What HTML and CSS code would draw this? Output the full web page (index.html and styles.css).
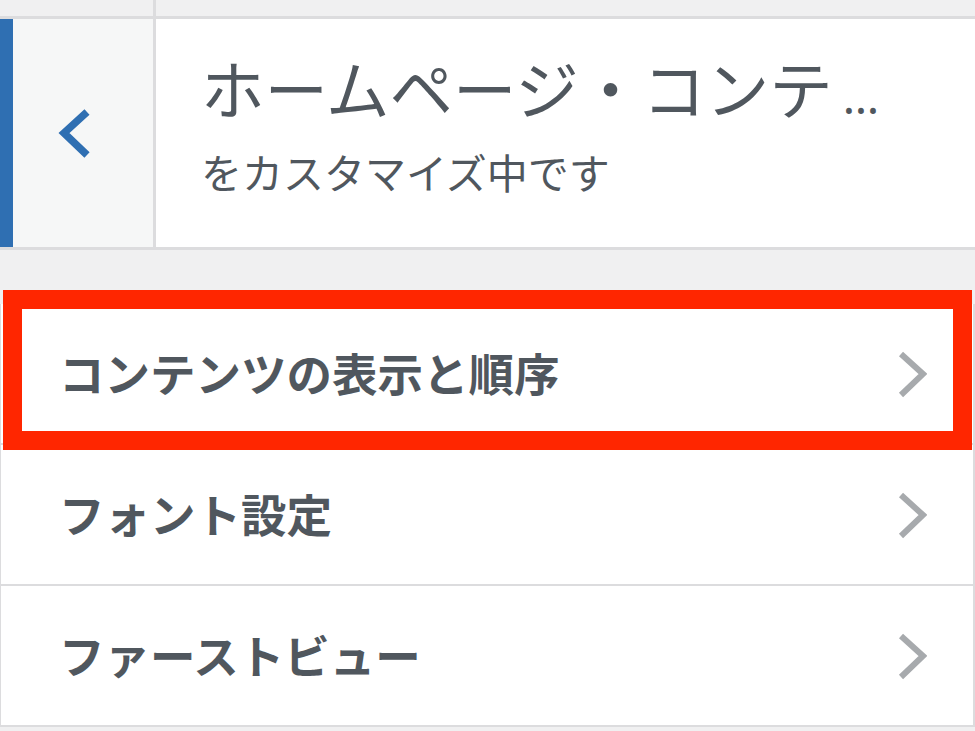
FILE: index.html
```html
<!DOCTYPE html>
<html lang="ja">
<head>
<meta charset="utf-8">
<title>Customizer</title>
<link rel="stylesheet" href="styles.css">
</head>
<body>
<div class="topbar"><div class="topbar-left"></div></div>
<div class="header">
  <div class="back">
    <svg class="back-icon" width="40" height="60" viewBox="0 0 40 60"><polyline points="37,9 14,30 37,52" fill="none" stroke="#2f6fb2" stroke-width="7.5"/></svg>
  </div>
  <div class="title-area">
    <div class="title">ホームページ・コンテ<span class="ellipsis">…</span></div>
    <div class="subtitle">をカスタマイズ中です</div>
  </div>
</div>
<div class="sections">
  <div class="row"><span class="row-label">コンテンツの表示と順序</span><svg class="chev" width="30" height="50" viewBox="0 0 30 50"><polyline points="4,5 26,25 4,46" fill="none" stroke="#a7aaad" stroke-width="6"/></svg></div>
  <div class="row"><span class="row-label">フォント設定</span><svg class="chev" width="30" height="50" viewBox="0 0 30 50"><polyline points="4,5 26,25 4,46" fill="none" stroke="#a7aaad" stroke-width="6"/></svg></div>
  <div class="row"><span class="row-label">ファーストビュー</span><svg class="chev" width="30" height="50" viewBox="0 0 30 50"><polyline points="4,5 26,25 4,46" fill="none" stroke="#a7aaad" stroke-width="6"/></svg></div>
  <div class="highlight"></div>
</div>
</body>
</html>
```
FILE: styles.css
```css
html, body {
  margin: 0;
  padding: 0;
}
body {
  background: #f0f0f1;
  font-family: "Noto Sans", "Noto Sans CJK JP", sans-serif;
  color: #50575e;
  width: 975px;
  height: 731px;
  overflow: hidden;
}
.topbar {
  height: 16px;
  display: flex;
}
.topbar-left {
  width: 153px;
  border-right: 3px solid #dcdcde;
}
.header {
  display: flex;
  height: 228px;
  border-top: 3px solid #dcdcde;
  border-bottom: 3px solid #dcdcde;
  background: #fff;
}
.back {
  width: 140px;
  border-left: 13px solid #2f6fb2;
  border-right: 3px solid #dcdcde;
  background: #f6f7f7;
  display: flex;
  align-items: center;
  padding-left: 37px;
  box-sizing: border-box;
  flex: 0 0 156px;
}
.back-icon {
  display: block;
}
.title-area {
  flex: 1;
  min-width: 0;
  padding: 34px 40px 0 45px;
}
.title {
  font-size: 63.5px;
  line-height: 74px;
  height: 74px;
  white-space: nowrap;
}
.ellipsis {
  font-family: "Noto Sans", sans-serif;
  font-size: 46px;
  line-height: 1;
  margin-left: 10px;
}
.subtitle {
  font-size: 41px;
  line-height: 48px;
  margin-top: 22px;
  white-space: nowrap;
}
.sections {
  position: relative;
  margin-top: 54px;
}
.row {
  height: 139px;
  background: #fff;
  border-left: 1px solid #dcdcde;
  border-right: 2px solid #dcdcde;
  border-bottom: 2px solid #dcdcde;
  display: flex;
  align-items: center;
  justify-content: space-between;
  padding: 0 46px 0 58px;
}
.row-label {
  font-size: 45.5px;
  font-weight: 700;
  line-height: 60px;
}
.chev {
  display: block;
}
.highlight {
  position: absolute;
  left: 3px;
  top: -14px;
  width: 969px;
  height: 160px;
  box-sizing: border-box;
  border: 19px solid #ff2600;
}
```
